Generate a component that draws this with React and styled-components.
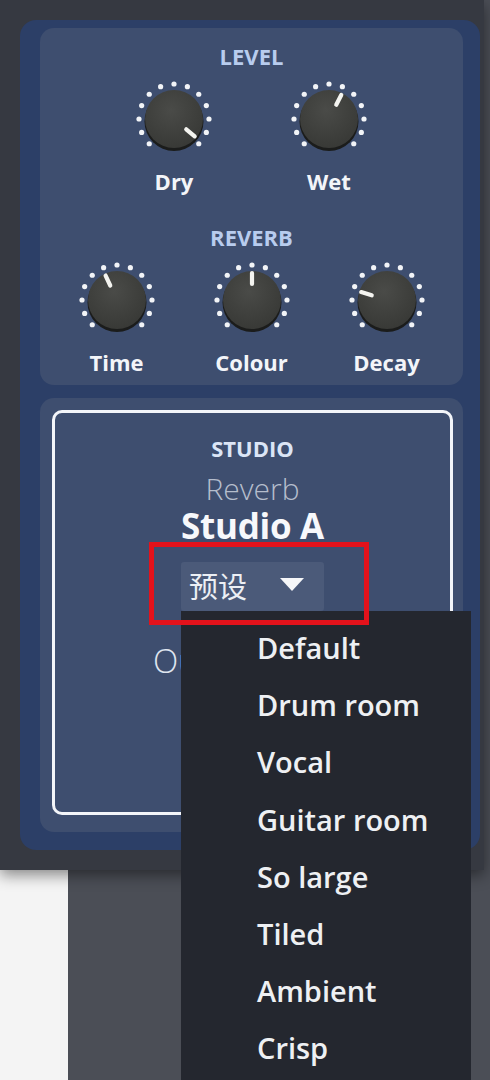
import styled, { createGlobalStyle } from "styled-components";

const GlobalStyle = createGlobalStyle`
  body {
    margin: 0;
    font-family: "Open Sans", "Noto Sans", sans-serif;
  }
`;

const Page = styled.div`
  height: 1080px;
  overflow: hidden;
  background: linear-gradient(to right, #f4f4f4 68px, #4b4e56 68px);
`;

const Frame = styled.div`
  width: 484px;
  box-sizing: border-box;
  padding: 20px 4px 20px 20px;
  background: #363941;
  box-shadow: 0 5px 14px rgba(0, 0, 0, 0.45);
`;

const Panel = styled.div`
  display: flex;
  flex-direction: column;
  gap: 13px;
  padding: 8px 17px 18px 20px;
  background: #2c3f67;
  border-radius: 16px;
`;

const Card = styled.div`
  display: flex;
  flex-direction: column;
  align-items: center;
  height: ${(p) => p.$height}px;
  box-sizing: border-box;
  padding: ${(p) => p.$padding};
  background: #3e4e6f;
  border-radius: 14px;
`;

const Heading = styled.div`
  font-size: 22px;
  font-weight: 700;
  line-height: 26px;
  color: #b8ccee;
  margin-top: ${(p) => p.$top || 0}px;
`;

const KnobRow = styled.div`
  display: flex;
  gap: ${(p) => p.$gap}px;
  margin-top: 8px;
`;

const KnobItem = styled.div`
  display: flex;
  flex-direction: column;
  align-items: center;
  width: 84px;
`;

const KnobLabel = styled.div`
  margin-top: 7px;
  font-size: 22px;
  font-weight: 700;
  line-height: 26px;
  color: #f3f5f9;
  white-space: nowrap;
`;

const dotAngles = Array.from({ length: 13 }, (_, i) => -135 + i * 22.5);

const Knob = ({ angle, label }) => {
  const rad = (angle * Math.PI) / 180;
  const x1 = 42 + Math.sin(rad) * 16;
  const y1 = 42 - Math.cos(rad) * 16;
  const x2 = 42 + Math.sin(rad) * 27;
  const y2 = 42 - Math.cos(rad) * 27;
  const id = `kg-${label}`;
  return (
    <KnobItem>
      <svg width="84" height="84" viewBox="0 0 84 84">
        <defs>
          <radialGradient id={id} cx="45%" cy="35%" r="70%">
            <stop offset="0%" stopColor="#4a4b48" />
            <stop offset="100%" stopColor="#373835" />
          </radialGradient>
        </defs>
        {dotAngles.map((a) => {
          const r = (a * Math.PI) / 180;
          return (
            <circle
              key={a}
              cx={42 + Math.sin(r) * 35}
              cy={42 - Math.cos(r) * 35}
              r="2.6"
              fill="#f2f4f7"
            />
          );
        })}
        <circle cx="42" cy="44.5" r="29.5" fill="#1b1c1b" />
        <circle cx="42" cy="42" r="29" fill={`url(#${id})`} />
        <line
          x1={x1}
          y1={y1}
          x2={x2}
          y2={y2}
          stroke="#f4f4f0"
          strokeWidth="4.2"
          strokeLinecap="round"
        />
      </svg>
      <KnobLabel>{label}</KnobLabel>
    </KnobItem>
  );
};

const StudioBox = styled.div`
  flex: 1;
  align-self: stretch;
  display: flex;
  flex-direction: column;
  align-items: center;
  border: 3px solid #f3f5f9;
  border-radius: 10px;
  padding-top: 21px;
`;

const Kicker = styled.div`
  font-size: 22px;
  font-weight: 700;
  line-height: 28px;
  color: #dbe5f6;
`;

const Subtitle = styled.div`
  margin-top: 10px;
  font-size: 30px;
  font-weight: 300;
  line-height: 34px;
  color: #b5bdcc;
`;

const Title = styled.div`
  margin-top: 2px;
  font-size: 35px;
  font-weight: 700;
  line-height: 36px;
  color: #f7f8fb;
  letter-spacing: -0.3px;
`;

const PresetWrap = styled.div`
  position: relative;
  margin-top: 18px;
`;

const PresetButton = styled.div`
  display: flex;
  align-items: center;
  width: 143px;
  height: 49px;
  box-sizing: border-box;
  padding: 0 0 4px 8px;
  background: #4b5a79;
  border-radius: 3px;
  font-family: "Noto Sans CJK SC", sans-serif;
  font-size: 29px;
  color: #eceff4;
`;

const Caret = styled.span`
  margin-left: 33px;
  width: 0;
  height: 0;
  border-left: 12px solid transparent;
  border-right: 12px solid transparent;
  border-top: 13px solid #f6f7f9;
`;

const Highlight = styled.div`
  position: absolute;
  left: -32px;
  top: -20px;
  width: 220px;
  height: 83px;
  box-sizing: border-box;
  border: 5px solid #e3121b;
  z-index: 3;
`;

const Menu = styled.ul`
  position: absolute;
  left: 0;
  top: 100%;
  width: 290px;
  height: 480px;
  margin: 0;
  padding: 8px 0 0;
  list-style: none;
  background: #24272f;
  z-index: 2;
`;

const MenuItem = styled.li`
  padding-left: 76px;
  height: 57.2px;
  line-height: 57.2px;
  font-family: "Open Sans", sans-serif;
  font-size: 29px;
  font-weight: 600;
  color: #eef0f3;
`;

const Readout = styled.div`
  align-self: flex-start;
  margin: 30px 0 0 98px;
  font-size: 33px;
  font-weight: 300;
  line-height: 40px;
  color: #dfe5ef;
`;

const presets = [
  "Default",
  "Drum room",
  "Vocal",
  "Guitar room",
  "So large",
  "Tiled",
  "Ambient",
  "Crisp",
];

export default function App() {
  return (
    <>
      <GlobalStyle />
      <Page>
        <Frame>
          <Panel>
            <Card $height={357} $padding="15px 0 0">
              <Heading>LEVEL</Heading>
              <KnobRow $gap={71}>
                <Knob label="Dry" angle={130} />
                <Knob label="Wet" angle={27} />
              </KnobRow>
              <Heading $top={30}>REVERB</Heading>
              <KnobRow $gap={51}>
                <Knob label="Time" angle={-25} />
                <Knob label="Colour" angle={0} />
                <Knob label="Decay" angle={-73} />
              </KnobRow>
            </Card>
            <Card $height={434} $padding="12px 10px 17px 12px">
              <StudioBox>
                <Kicker>STUDIO</Kicker>
                <Subtitle>Reverb</Subtitle>
                <Title>Studio A</Title>
                <PresetWrap>
                  <PresetButton>
                    预设
                    <Caret />
                  </PresetButton>
                  <Highlight />
                  <Menu>
                    {presets.map((p) => (
                      <MenuItem key={p}>{p}</MenuItem>
                    ))}
                  </Menu>
                </PresetWrap>
                <Readout>Output</Readout>
              </StudioBox>
            </Card>
          </Panel>
        </Frame>
      </Page>
    </>
  );
}
